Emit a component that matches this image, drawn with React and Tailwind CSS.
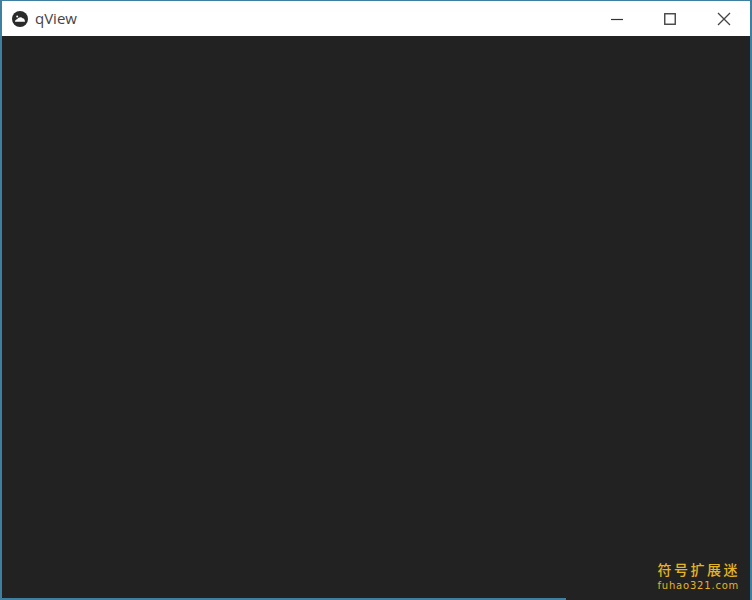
import React from 'react';

const QViewLogo = () => (
  <svg width="16" height="16" viewBox="0 0 16 16" className="shrink-0">
    <circle cx="8" cy="8" r="8" fill="#2a2a2a" />
    <path d="M3 10.8 C3 9 4 8.2 5.2 8.2 C6 6.2 9.4 5.4 10.6 7.2 C12 7.2 13 8.8 13 10.8 Z" fill="#ffffff" />
    <circle cx="5.2" cy="5.6" r="1" fill="#ffffff" />
  </svg>
);

export default function App() {
  return (
    <div className="relative w-[752px] h-[600px] flex flex-col overflow-hidden bg-[#222222] border-x-2 border-t border-[#3f7f9f]" style={{ fontFamily: '"Open Sans", sans-serif' }}>
      <div className="h-[35px] shrink-0 bg-white flex items-center">
        <div className="flex items-center gap-[7px] pl-[10px] flex-1">
          <QViewLogo />
          <span className="text-[15px] text-[#444444] leading-none">qView</span>
        </div>
        <div className="flex items-center pr-[19px]">
          <svg width="12" height="12" viewBox="0 0 12 12" className="mr-[41px]"><path d="M0 6.5H12" stroke="#333333" strokeWidth="1.2" /></svg>
          <svg width="12" height="12" viewBox="0 0 12 12" className="mr-[41px]"><rect x="0.75" y="0.75" width="10.5" height="10.5" fill="none" stroke="#444444" strokeWidth="1.4" /></svg>
          <svg width="14" height="14" viewBox="0 0 14 14"><path d="M1 1L13 13M13 1L1 13" stroke="#444444" strokeWidth="1.3" /></svg>
        </div>
      </div>

      <div className="flex-1 bg-[#222222]" />

      <div className="h-[2px] w-[564px] shrink-0 bg-[#3f7f9f]" />

      <div className="absolute right-[10px] bottom-[9px] flex flex-col items-start text-[#e6b422]">
        <span className="text-[14px] leading-[21px] tracking-[2.5px] font-medium" style={{ fontFamily: '"Noto Sans CJK SC", sans-serif' }}>符号扩展迷</span>
        <span className="text-[10px] leading-[11px] tracking-[0.8px]" style={{ fontFamily: '"DejaVu Sans", sans-serif' }}>fuhao321.com</span>
      </div>
    </div>
  );
}
